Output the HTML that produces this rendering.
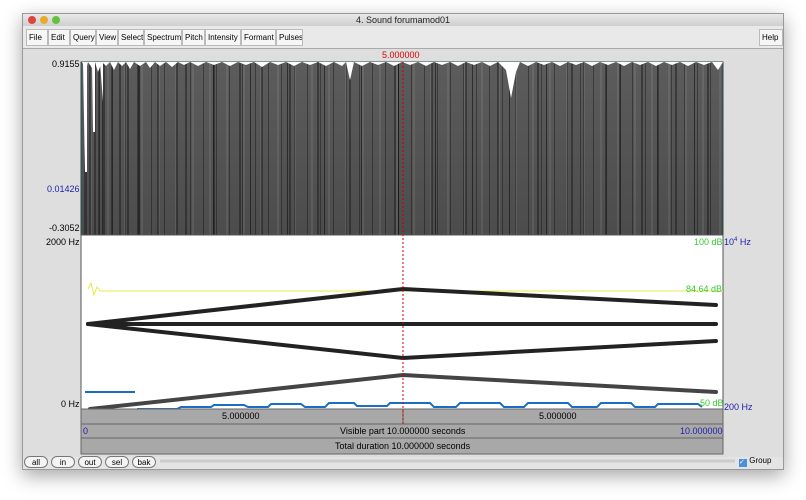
<!DOCTYPE html>
<html><head><style>
body{margin:0;width:806px;height:500px;background:#fff;position:relative;overflow:hidden;font-family:"Liberation Sans",sans-serif}
.win{position:absolute;left:22px;top:13px;width:762px;height:457px;background:#e4e4e4;box-shadow:0 6px 18px rgba(0,0,0,.35);border:1px solid #999;box-sizing:border-box}
.title{position:absolute;left:0;top:0;width:100%;height:12px;background:linear-gradient(#e8e8e8,#cfcfcf);font-size:9px;text-align:center;line-height:12px;color:#222}
.menu{position:absolute;left:0;top:12px;width:100%;height:22px;background:#e9e9e9;border-bottom:1px solid #aaa}
.m{position:absolute;top:3px;height:17px;border:1px solid #bbb;background:#f6f6f6;font-size:8px;line-height:16px;padding:0 0 0 2px;box-sizing:border-box;overflow:hidden;white-space:nowrap}
.lbl{position:absolute;font-size:9px;white-space:nowrap}
.btn{position:absolute;height:12px;border:1px solid #777;border-radius:7px;background:#f4f4f4;font-size:8px;line-height:11px;text-align:center;box-sizing:border-box}
.wave{position:absolute;left:81px;top:62px;width:642px;height:173px;
background:
repeating-linear-gradient(90deg,transparent 0 5px,rgba(0,0,0,.35) 5px 6px,transparent 6px 13px),
repeating-linear-gradient(90deg,transparent 0 9px,rgba(255,255,255,.08) 9px 11px,transparent 11px 17px),
repeating-linear-gradient(90deg,transparent 0 21px,rgba(0,0,0,.5) 21px 22px,transparent 22px 37px),
linear-gradient(#5c5c5c,#4c4c4c)}
</style></head><body>
<div class="win">
<div class="title"><span style="position:absolute;left:5px;top:2px;width:8px;height:8px;border-radius:50%;background:#e0443e"></span><span style="position:absolute;left:17px;top:2px;width:8px;height:8px;border-radius:50%;background:#e9a92d"></span><span style="position:absolute;left:29px;top:2px;width:8px;height:8px;border-radius:50%;background:#62c23e"></span>4. Sound forumamod01</div>
<div class="menu">
<div class="m" style="left:3px;width:22px">File</div><div class="m" style="left:25px;width:22px">Edit</div><div class="m" style="left:47px;width:26px">Query</div><div class="m" style="left:73px;width:22px">View</div><div class="m" style="left:95px;width:26px">Select</div><div class="m" style="left:121px;width:38px">Spectrum</div><div class="m" style="left:159px;width:23px">Pitch</div><div class="m" style="left:182px;width:36px">Intensity</div><div class="m" style="left:218px;width:35px">Formant</div><div class="m" style="left:253px;width:27px">Pulses</div>
<div class="m" style="left:736px;width:24px">Help</div>
</div>
<div style="position:absolute;left:0;top:35px;width:100%;height:408px;background:#dedede"></div>
</div>
<div class="wave"></div>
<div class="lbl" style="left:382px;top:50px;color:#d00">5.000000</div>
<div class="lbl" style="left:52px;top:59px">0.9155</div>
<div class="lbl" style="left:47px;top:184px;color:#22a">0.01426</div>
<div class="lbl" style="left:49px;top:223px">-0.3052</div>
<div class="lbl" style="left:46px;top:237px">2000 Hz</div>
<div class="lbl" style="left:61px;top:399px">0 Hz</div>
<div class="lbl" style="left:724px;top:237px;color:#22a">10<sup style="font-size:6px">4</sup> Hz</div>
<div class="lbl" style="left:724px;top:402px;color:#22a">200 Hz</div>
<svg style="position:absolute;left:0;top:0" width="806" height="500">
<rect x="81" y="62" width="642" height="173" fill="none" stroke="#2a4a4a"/>
<g stroke="#1a1a1a" stroke-width="1">
<path d="M85 62V235M90 62V235M95 62V235M99 62V235M104 62V235M112 62V235M120 62V235M128 62V235M138 62V235M158 62V235M186 62V235M214 62V235M240 62V235M262 62V235M290 62V235M318 62V235M350 62V235M395 62V235M432 62V235M466 62V235M498 62V235M538 62V235M572 62V235M606 62V235M642 62V235M676 62V235M708 62V235"/>
</g>
<path d="M82 62 L86 70 L88 62 L92 68 L95 62 L98 72 L102 62 L106 66 L110 62 L114 70 L118 62 L122 66 L126 62 L130 69 L134 62 L140 66 L146 62 L150 68 L155 62 L160 66 L166 62 L172 67 L178 62 L184 65 L190 62 L198 66 L206 62 L214 65 L222 62 L230 66 L238 62 L246 65 L254 62 L262 67 L270 62 L278 65 L286 62 L294 66 L302 62 L310 65 L318 62 L326 66 L334 62 L342 66 L346 62 L350 80 L354 62 L362 66 L370 62 L378 65 L386 62 L394 66 L402 62 L410 65 L418 62 L426 66 L434 62 L442 65 L450 62 L458 66 L466 62 L474 65 L482 62 L490 66 L498 62 L506 70 L511 98 L516 72 L520 62 L528 66 L536 62 L544 65 L552 62 L560 66 L568 62 L576 65 L584 62 L592 66 L600 62 L608 65 L616 62 L624 66 L632 62 L640 65 L648 62 L656 66 L664 62 L672 65 L680 62 L688 66 L696 62 L704 65 L712 62 L718 70 L723 62 Z" fill="#fff"/>
<g fill="#fff"><path d="M83 62h4v110h-2z"/><path d="M92 62h3v70h-2z"/><path d="M100 62h3v40z"/></g>
<rect x="81" y="235" width="642" height="174" fill="#fff" stroke="#555"/>
<path d="M88 289l3-6 3 12 3-8 3 4h623" stroke="#e8e84a" fill="none"/>
<g stroke="#222" stroke-width="4" fill="none" stroke-linecap="round">
<path d="M88 324L403 289L716 305"/><path d="M88 324H716"/><path d="M88 324L403 358L716 341"/><path d="M90 409L403 375L716 392" stroke="#444"/>
</g>
<path d="M85 392H135" stroke="#1a6fc4" stroke-width="2"/>
<path d="M137 409h40l4-2h30l3-2h30l4 2h20l3-3h30l4 3h20l4-4h25l3 3h30l3-3h40l4 4h22l4-4h40l4 4h20l4-4h40l4 4h25l4-4h30l4 4h20l3-3h40l4 3" stroke="#1a6fc4" stroke-width="2" fill="none"/>
<rect x="81" y="409" width="642" height="15" fill="#a8a8a8" stroke="#666"/>
<rect x="81" y="424" width="642" height="14" fill="#a8a8a8" stroke="#666"/>
<rect x="81" y="438" width="642" height="16" fill="#a8a8a8" stroke="#666"/>
<path d="M403 409v15" stroke="#666"/>
<path d="M403 62V424" stroke="#c00" stroke-dasharray="2,2"/>
<path d="M160 461H735" stroke="#ccc" stroke-width="3"/>
</svg>
<div class="lbl" style="left:694px;top:237px;color:#3c3">100 dB</div>
<div class="lbl" style="left:686px;top:284px;color:#3c3">84.64 dB</div>
<div class="lbl" style="left:700px;top:398px;color:#3c3">50 dB</div>
<div class="lbl" style="left:222px;top:411px">5.000000</div>
<div class="lbl" style="left:539px;top:411px">5.000000</div>
<div class="lbl" style="left:83px;top:426px;color:#22a">0</div>
<div class="lbl" style="left:340px;top:426px">Visible part 10.000000 seconds</div>
<div class="lbl" style="left:680px;top:426px;color:#22a">10.000000</div>
<div class="lbl" style="left:335px;top:441px">Total duration 10.000000 seconds</div>
<div class="btn" style="left:24px;top:456px;width:24px">all</div>
<div class="btn" style="left:51px;top:456px;width:24px">in</div>
<div class="btn" style="left:78px;top:456px;width:24px">out</div>
<div class="btn" style="left:105px;top:456px;width:24px">sel</div>
<div class="btn" style="left:132px;top:456px;width:24px">bak</div>
<div class="lbl" style="left:739px;top:456px;font-size:8px"><span style="display:inline-block;width:8px;height:8px;background:#4a8fd8;vertical-align:-1px;color:#fff;font-size:7px;line-height:8px">✓</span> Group</div>
</body></html>
